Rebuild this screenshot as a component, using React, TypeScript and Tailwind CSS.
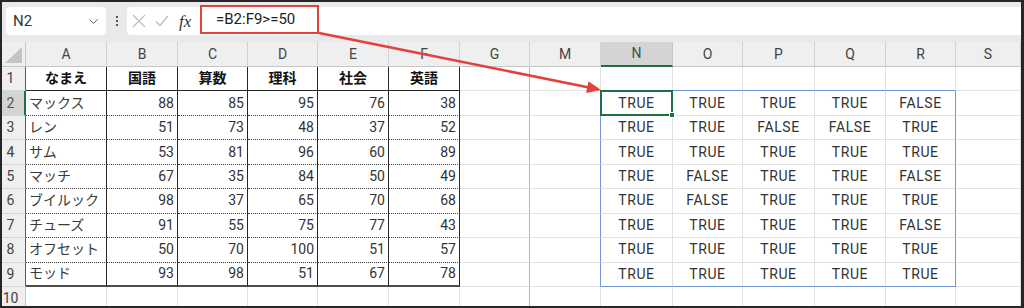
import React from 'react';
import { ChevronDown } from 'lucide-react';

const COLS = ['A', 'B', 'C', 'D', 'E', 'F', 'G', 'M', 'N', 'O', 'P', 'Q', 'R', 'S'];
const HEADS = ['なまえ', '国語', '算数', '理科', '社会', '英語'];

const SCORES: [string, number, number, number, number, number][] = [
  ['マックス', 88, 85, 95, 76, 38],
  ['レン', 51, 73, 48, 37, 52],
  ['サム', 53, 81, 96, 60, 89],
  ['マッチ', 67, 35, 84, 50, 49],
  ['ブイルック', 98, 37, 65, 70, 68],
  ['チューズ', 91, 55, 75, 77, 43],
  ['オフセット', 50, 70, 100, 51, 57],
  ['モッド', 93, 98, 51, 67, 78],
];

const BLUE = 'border-r border-r-[#7096d8]';

// right + bottom borders for a body cell (r = sheet row 1..10, ci = index into COLS)
const borders = (r: number, ci: number) => {
  let right = 'border-r border-r-[#e1e1e1]';
  let bottom = 'border-b border-b-[#e1e1e1]';
  if (r <= 9 && ci <= 5) {
    right = 'border-r border-r-[#262626]';
    if (r === 1) bottom = 'border-b border-b-[#262626]';
    else if (r === 9) bottom = 'border-b-2 border-b-[#4d4d4d]';
    else bottom = 'border-b border-b-[#3c3c3c] [border-bottom-style:dotted]!';
  }
  if (ci === 6) right = 'border-r border-r-[#b8b8b8]';
  if ((ci === 7 || ci === 12) && r >= 2 && r <= 9) right = BLUE;
  if ((r === 1 || r === 9) && ci >= 8 && ci <= 12) bottom = 'border-b border-b-[#7096d8]';
  if (r === 10) bottom = '';
  return `${right} ${bottom}`;
};

const cellText = (r: number, ci: number) => {
  if (r === 1 && ci <= 5) return { text: HEADS[ci], cls: 'justify-center font-bold text-[#111]' };
  if (r >= 2 && r <= 9) {
    const row = SCORES[r - 2];
    if (ci === 0) return { text: row[0], cls: 'justify-start pl-[3px] text-[#3a3a3a]' };
    if (ci <= 5) return { text: String(row[ci]), cls: 'justify-end pr-[3px] text-[#333]' };
    if (ci >= 8 && ci <= 12) {
      const v = row[ci - 7] as number;
      return { text: v >= 50 ? 'TRUE' : 'FALSE', cls: 'justify-center tracking-[0.04em] text-[#333]' };
    }
  }
  return { text: '', cls: '' };
};

const FormulaBar = () => (
  <div className="h-[40px] shrink-0 bg-[#e9e9e9] flex items-start pt-[5px] pl-[4px]">
    <div className="w-[100px] h-[28px] rounded-[4px] bg-white flex items-center pl-[7px] pr-[5px] text-[15px] text-[#333] font-['Roboto',sans-serif]">
      <span className="flex-1">N2</span>
      <ChevronDown size={15} strokeWidth={1.6} className="text-[#555]" />
    </div>
    <div className="w-[21px] h-[28px] flex flex-col items-center justify-center gap-[2px]">
      <span className="w-[2px] h-[2px] bg-[#555]" />
      <span className="w-[2px] h-[2px] bg-[#555]" />
      <span className="w-[2px] h-[2px] bg-[#555]" />
    </div>
    <div className="flex-1 h-[28px] rounded-l-[4px] bg-white flex items-center pl-[5px]">
      <div className="w-[23px] flex items-center">
        <svg width="14" height="14" viewBox="0 0 14 14" fill="none" stroke="#bdbdbd" strokeWidth="1.2">
          <path d="M1 1L13 13M13 1L1 13" />
        </svg>
      </div>
      <div className="w-[24px] flex items-center">
        <svg width="14" height="12" viewBox="0 0 14 12" fill="none" stroke="#bdbdbd" strokeWidth="1.2">
          <path d="M1 6.5L5 10.5L13 1" />
        </svg>
      </div>
      <div className="w-[21px] text-[17px] italic text-[#333] font-['Liberation_Serif',serif] leading-none">fx</div>
      <div className="self-start -mt-[2px] w-[119px] h-[29px] border-2 border-[#e5403c] flex items-center pl-[14px] text-[15px] text-[#222] font-['Roboto',sans-serif]">
        =B2:F9&gt;=50
      </div>
    </div>
  </div>
);

const Sheet = () => {
  const rows = [1, 2, 3, 4, 5, 6, 7, 8, 9, 10];
  return (
    <div className="flex-1 grid grid-cols-[24px_81px_71px_70px_70px_71px_71px_70px_71px_72px_70px_72px_71px_70px_1fr] grid-rows-[25px_repeat(9,24.44px)_1fr] text-[14px] font-['Roboto','Noto_Sans_CJK_JP',sans-serif]">
      {/* header row */}
      <div className="relative bg-[#efefef] border-r border-r-[#c6c6c6] border-b border-b-[#c6c6c6]">
        <svg className="absolute right-[3px] bottom-[3px]" width="17" height="16" viewBox="0 0 17 16">
          <polygon points="17,0 17,16 0,16" fill="#c4c4c4" />
        </svg>
      </div>
      {COLS.map((c) =>
        c === 'N' ? (
          <div key={c} className="bg-[#d4d4d4] border-r border-r-[#c6c6c6] border-b-2 border-b-[#1e7145] flex items-center justify-center text-[#2f5a46]">
            {c}
          </div>
        ) : (
          <div key={c} className="bg-[#efefef] border-r border-r-[#d2d2d2] border-b border-b-[#c6c6c6] flex items-center justify-center text-[#444]">
            {c}
          </div>
        )
      )}

      {rows.map((r) => (
        <React.Fragment key={r}>
          {r === 2 ? (
            <div className="bg-[#d4d4d4] border-r-2 border-r-[#1e7145] border-b border-b-[#d6d6d6] flex items-center justify-center pr-[5px] text-[#555]">
              {r}
            </div>
          ) : r <= 9 ? (
            <div className="bg-[#efefef] border-r border-r-[#5a5a5a] border-b border-b-[#d6d6d6] flex items-center justify-center pr-[6px] text-[#444]">
              {r}
            </div>
          ) : (
            <div className="bg-[#efefef] border-r border-r-[#c6c6c6] flex items-start pt-[1px] justify-center pr-[6px] text-[#444]">
              {r}
            </div>
          )}
          {COLS.map((c, ci) => {
            const t = cellText(r, ci);
            return (
              <div key={c} className={`relative flex items-center whitespace-nowrap ${borders(r, ci)} ${t.cls}`}>
                {t.text}
                {r === 2 && c === 'N' && (
                  <div className="absolute -inset-px border-2 border-[#1e7145] z-10">
                    <span className="absolute -right-[4px] -bottom-[4px] w-[6px] h-[6px] bg-[#1e7145] border border-white" />
                  </div>
                )}
              </div>
            );
          })}
        </React.Fragment>
      ))}
    </div>
  );
};

export default function App() {
  return (
    <div className="relative w-[1024px] h-[308px] bg-[#262626] pt-[2px] pl-[2px] pr-[3px] pb-[2px] overflow-hidden">
      <div className="h-full flex flex-col bg-white overflow-hidden">
        <FormulaBar />
        <Sheet />
      </div>
      <svg className="absolute inset-0 pointer-events-none z-20" width="1024" height="308" viewBox="0 0 1024 308">
        <line x1="319" y1="33" x2="589" y2="87.5" stroke="#e5403c" strokeWidth="2.5" />
        <polygon points="601,90 588.5,81.3 586.1,93.1" fill="#e5403c" />
      </svg>
    </div>
  );
}
